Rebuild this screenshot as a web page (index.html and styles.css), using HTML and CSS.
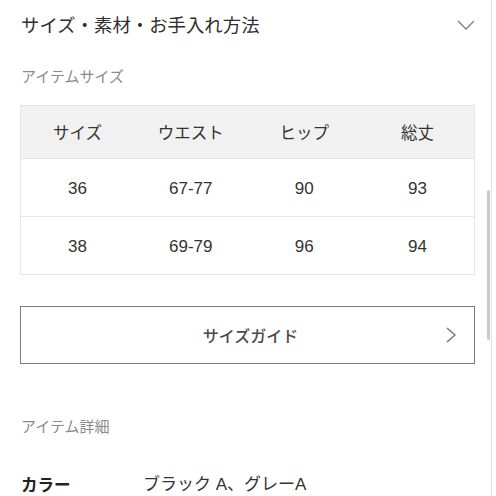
FILE: index.html
```html
<!DOCTYPE html>
<html lang="ja">
<head>
<meta charset="utf-8">
<link rel="stylesheet" href="styles.css">
</head>
<body>
<div class="page">
  <div class="accordion-head">
    <h2 class="title">サイズ・素材・お手入れ方法</h2>
    <svg class="chev-down" width="18" height="10" viewBox="0 0 18 10"><path d="M1 1 L9 9 L17 1" fill="none" stroke="#808080" stroke-width="1.3"/></svg>
  </div>
  <div class="sub">アイテムサイズ</div>
  <table class="size-table">
    <thead>
      <tr><th>サイズ</th><th>ウエスト</th><th>ヒップ</th><th>総丈</th></tr>
    </thead>
    <tbody>
      <tr><td>36</td><td>67-77</td><td>90</td><td>93</td></tr>
      <tr><td>38</td><td>69-79</td><td>96</td><td>94</td></tr>
    </tbody>
  </table>
  <div class="guide-btn">
    <span class="guide-label">サイズガイド</span>
    <svg class="chev-right" width="10" height="16" viewBox="0 0 10 16"><path d="M1 1 L9 8 L1 15" fill="none" stroke="#707070" stroke-width="1.3"/></svg>
  </div>
  <div class="sub sub-detail">アイテム詳細</div>
  <div class="detail-row">
    <span class="detail-key">カラー</span>
    <span class="detail-val">ブラック A、グレーA</span>
  </div>
  <div class="scroll-thumb"></div>
</div>
</body>
</html>
```

FILE: styles.css
```css
html, body {
  margin: 0;
  padding: 0;
  background: #fff;
}
body {
  font-family: "Liberation Sans", "Noto Sans CJK JP", sans-serif;
  color: #333;
  overflow: hidden;
}
.page {
  position: relative;
  width: 492px;
  height: 496px;
  box-sizing: border-box;
  border-right: 1px solid #e2e2e2;
  padding: 0 17px 0 20px;
}
.accordion-head {
  height: 52px;
  display: flex;
  align-items: center;
  justify-content: space-between;
  padding-left: 1px;
}
.title {
  margin: 0;
  font-size: 18.4px;
  font-weight: 400;
  color: #2f2f2f;
  line-height: 24px;
}
.chev-down {
  margin-right: -1px;
  margin-top: -2px;
}
.sub {
  margin-top: 15px;
  padding-left: 1px;
  font-size: 15px;
  line-height: 20px;
  color: #8a8a8a;
}
.size-table {
  margin-top: 18px;
  width: 455px;
  border-collapse: collapse;
  table-layout: fixed;
  border: 1px solid #e6e6e6;
}
.size-table th {
  background: #f1f1f1;
  height: 52px;
  font-size: 16.5px;
  font-weight: 400;
  color: #333;
  padding: 0;
  border-bottom: 1px solid #e6e6e6;
}
.size-table td {
  height: 58px;
  box-sizing: border-box;
  text-align: center;
  font-size: 17px;
  color: #333;
  padding: 3px 0 0;
  border-top: 1px solid #e6e6e6;
}
.guide-btn {
  margin-top: 31px;
  width: 455px;
  height: 58px;
  box-sizing: border-box;
  border: 1px solid #7a7a7a;
  display: flex;
  align-items: center;
  justify-content: center;
  position: relative;
}
.guide-label {
  font-size: 16px;
  font-weight: 500;
  color: #4a4a4a;
  margin-left: 6px;
}
.chev-right {
  position: absolute;
  right: 18px;
  top: 20px;
}
.sub-detail {
  margin-top: 53px;
}
.detail-row {
  margin-top: 37px;
  display: flex;
  align-items: center;
  line-height: 22px;
  padding-left: 1px;
}
.detail-key {
  width: 122px;
  font-size: 16.5px;
  font-weight: 700;
  color: #222;
}
.detail-val {
  font-size: 17px;
  color: #333;
}
.scroll-thumb {
  position: absolute;
  right: 1px;
  top: 190px;
  width: 3px;
  height: 150px;
  border-radius: 2px;
  background: #c9c9c9;
}
```
